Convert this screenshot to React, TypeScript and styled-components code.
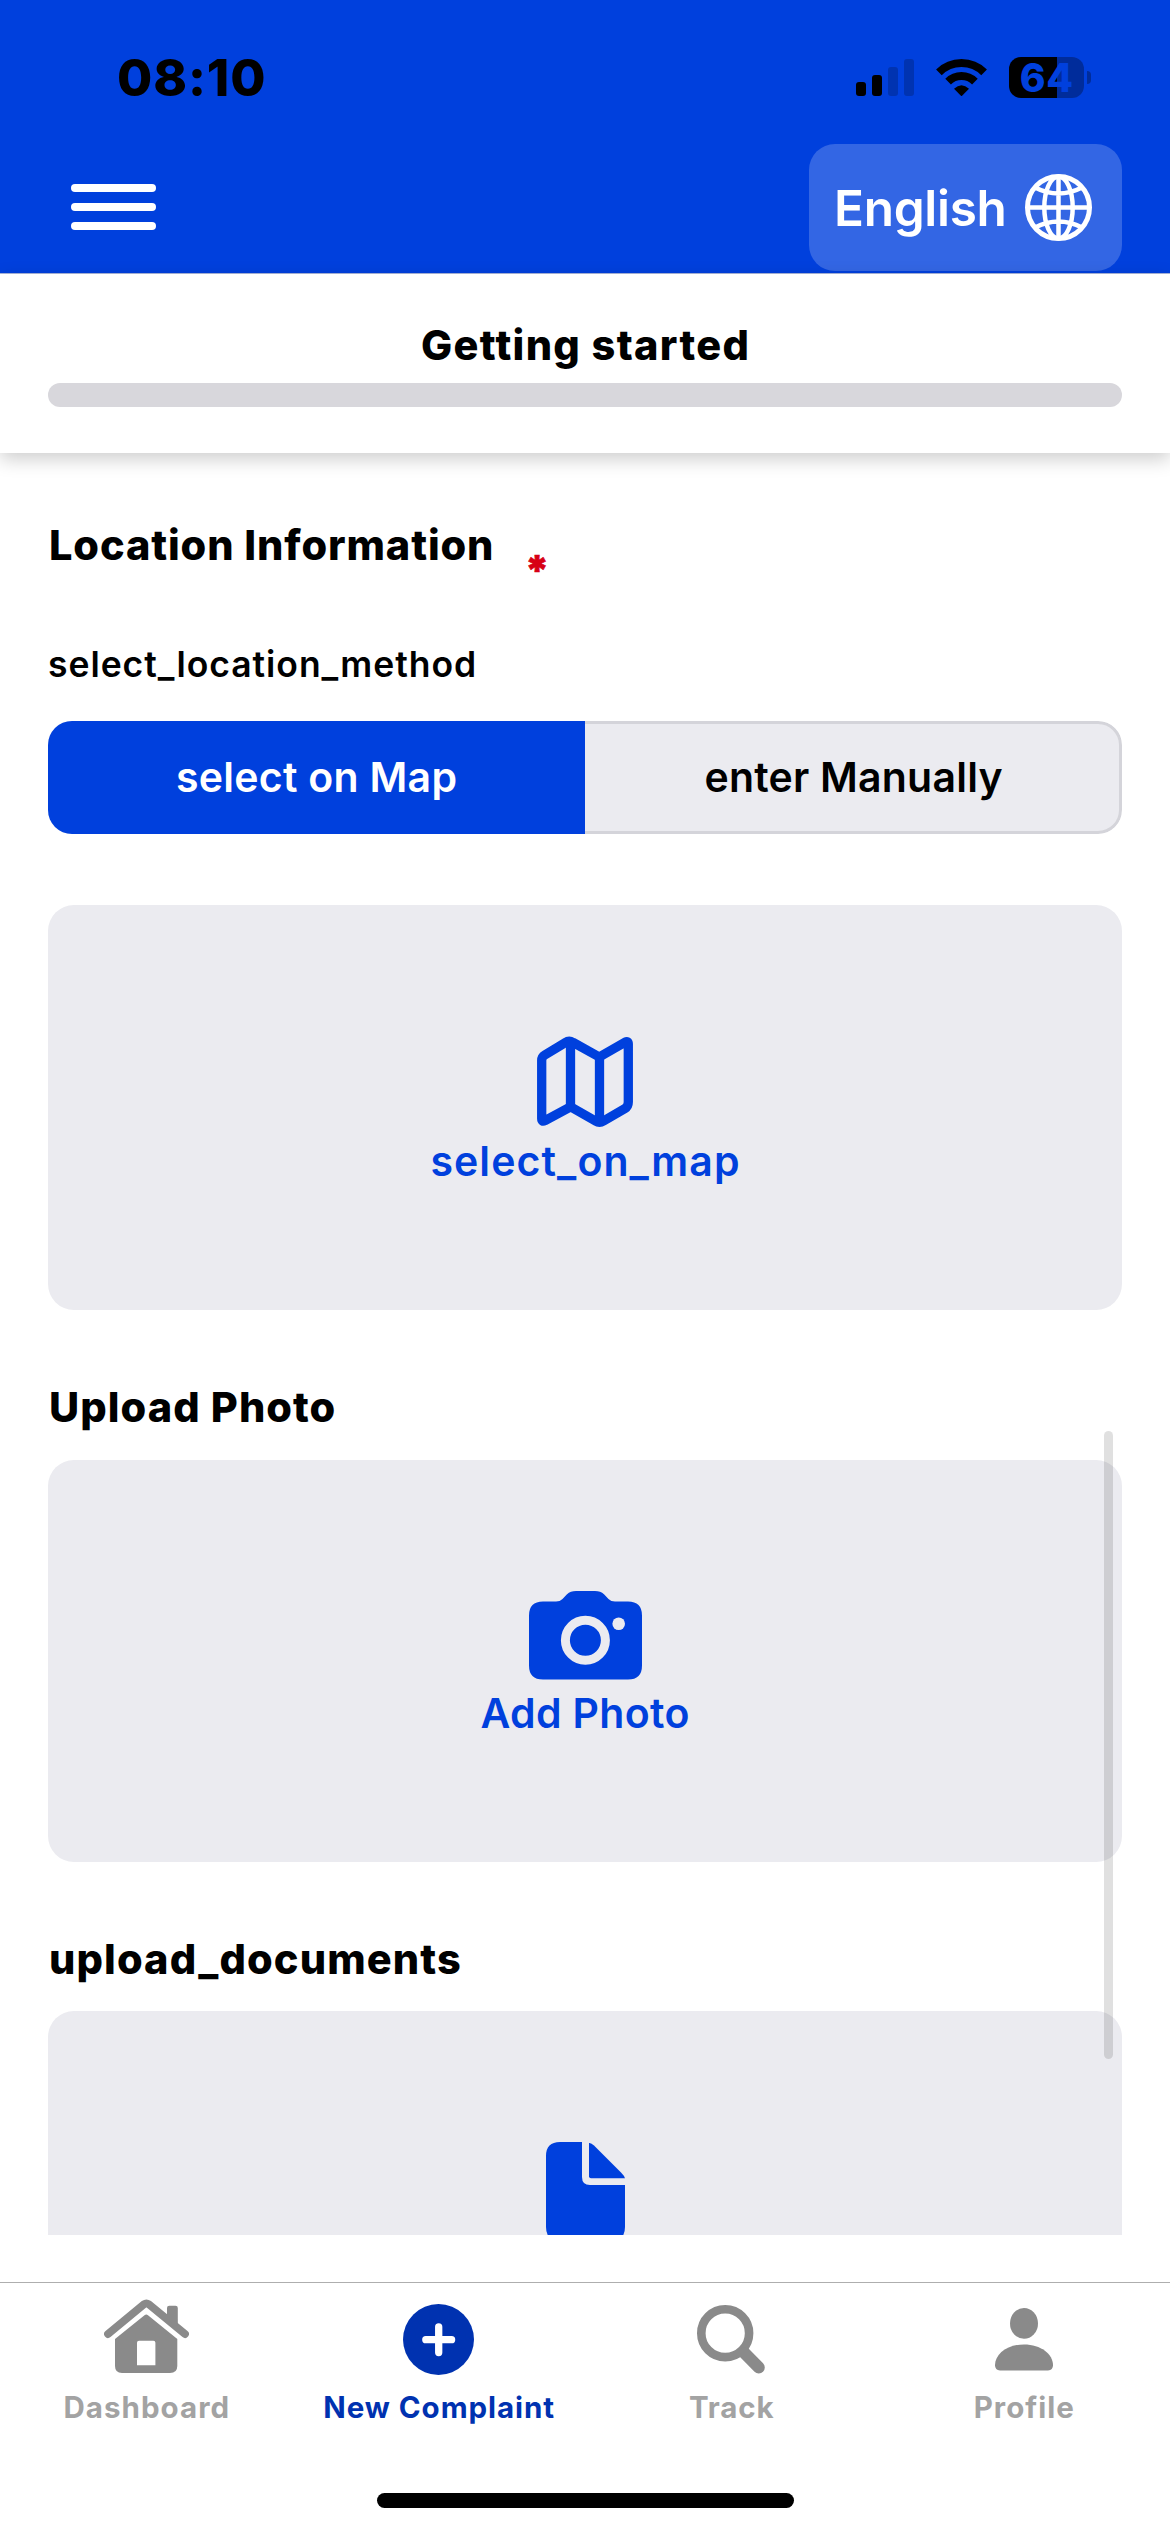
import React from 'react';
import styled, { createGlobalStyle } from 'styled-components';

const BLUE = '#0040dd';
const NAVY = '#0032b0';
const FILL = '#ebebf0';

const GlobalStyle = createGlobalStyle`
  * { box-sizing: border-box; }
  body { margin: 0; background: #fff; }
`;

const Screen = styled.div`
  display: flex;
  flex-direction: column;
  width: 1170px;
  height: 2532px;
  overflow: hidden;
  background: #fff;
  font-family: Inter, 'Liberation Sans', sans-serif;
`;

const Label = styled.span<{ $size: number; $weight: number; $track?: number; $color?: string; $line?: number }>`
  display: block;
  white-space: nowrap;
  font-size: ${(p) => p.$size}px;
  font-weight: ${(p) => p.$weight};
  line-height: ${(p) => p.$line ?? 50}px;
  letter-spacing: ${(p) => p.$track ?? 0}px;
  margin-right: ${(p) => -(p.$track ?? 0)}px;
  color: ${(p) => p.$color ?? '#000'};
`;

const Header = styled.header`
  flex: none;
  height: 274px;
  background: ${BLUE};
  border-bottom: 1px solid #a9b6dc;
`;

const StatusBar = styled.div`
  display: flex;
  align-items: center;
  justify-content: space-between;
  height: 144px;
  padding: 11px 79px 0 117px;
`;

const StatusIcons = styled.div`
  display: flex;
  align-items: center;
`;

const SignalBars = styled.div`
  display: flex;
  align-items: flex-end;
  gap: 6px;
  height: 37px;
  margin-right: 22px;
`;

const SignalBar = styled.i<{ $height: number; $on: boolean }>`
  width: 10px;
  height: ${(p) => p.$height}px;
  border-radius: 3px;
  background: ${(p) => (p.$on ? '#000' : '#0033b1')};
`;

const Battery = styled.div`
  display: flex;
  align-items: center;
  justify-content: center;
  width: 75px;
  height: 41px;
  margin-left: 22px;
  border-radius: 12px;
  background: linear-gradient(to right, #000 48px, #002c9b 48px);
`;

const BatteryNub = styled.i`
  width: 4px;
  height: 13px;
  margin-left: 3px;
  border-radius: 0 5px 5px 0;
  background: #002c9b;
`;

const NavRow = styled.div`
  display: flex;
  align-items: flex-start;
  justify-content: space-between;
  padding: 0 48px 0 71px;
`;

const MenuButton = styled.button`
  display: flex;
  flex-direction: column;
  justify-content: center;
  gap: 11.3px;
  width: 85px;
  height: 126px;
  padding: 0;
  border: 0;
  background: none;
`;

const MenuLine = styled.i`
  width: 85px;
  height: 7.8px;
  border-radius: 4px;
  background: #fff;
`;

const LanguageButton = styled.button`
  display: flex;
  align-items: center;
  justify-content: space-between;
  width: 313px;
  height: 127px;
  padding: 0 30px 0 25px;
  border: 0;
  border-radius: 26px;
  background: #3366e4;
  font-family: inherit;
`;

const ProgressPanel = styled.section`
  position: relative;
  z-index: 1;
  flex: none;
  display: flex;
  flex-direction: column;
  align-items: center;
  gap: 13px;
  height: 179px;
  padding: 46px 48px 0;
  background: #fff;
  box-shadow: 0 6px 18px rgba(0, 0, 0, 0.2);
`;

const ProgressTrack = styled.div`
  width: 100%;
  height: 24px;
  border-radius: 12px;
  background: #d8d7dc;
`;

const Form = styled.main`
  position: relative;
  flex: none;
  display: flex;
  flex-direction: column;
  height: 1782px;
  padding: 67px 48px 0;
  overflow: hidden;
`;

const HeadingRow = styled.div`
  display: flex;
  height: 50px;
  margin-bottom: 70px;
  padding-left: 1px;
`;

const RequiredMark = styled(Label)`
  margin: 25px 0 0 31px;
  -webkit-text-stroke: 0.6px currentColor;
`;

const Segmented = styled.div`
  position: relative;
  flex: none;
  display: grid;
  grid-template-columns: 1fr 1fr;
  height: 113px;
  margin: 31px 0 71px;
  border-radius: 24px;
  overflow: hidden;
  background: ${FILL};
  &::after {
    content: '';
    position: absolute;
    inset: 0;
    border: 3px solid rgba(60, 60, 67, 0.13);
    border-radius: 24px;
    clip-path: inset(0 0 0 50%);
  }
`;

const Segment = styled.button<{ $active?: boolean }>`
  display: flex;
  align-items: center;
  justify-content: center;
  padding: 0 0 2px;
  border: 0;
  font-family: inherit;
  background: ${(p) => (p.$active ? BLUE : 'transparent')};
`;

const DropCard = styled.button<{ $height: number; $gap?: number }>`
  flex: none;
  display: flex;
  flex-direction: column;
  align-items: center;
  gap: ${(p) => p.$gap ?? 8}px;
  height: ${(p) => p.$height}px;
  padding: 131px 0 0;
  border: 0;
  border-radius: 26px;
  background: ${FILL};
  font-family: inherit;
  & > svg { flex: none; }
`;

const SectionTitle = styled.div<{ $bottom: number }>`
  flex: none;
  padding: 72px 0 ${(p) => p.$bottom}px 1px;
`;

const ScrollThumb = styled.div`
  position: absolute;
  right: 57px;
  top: 978px;
  width: 9px;
  height: 628px;
  border-radius: 5px;
  background: rgba(0, 0, 0, 0.12);
`;

const TabBar = styled.nav`
  flex: none;
  display: grid;
  grid-template-columns: repeat(4, 1fr);
  height: 211px;
  margin-top: 47px;
  border-top: 1px solid #aeaeae;
`;

const Tab = styled.a`
  display: flex;
  flex-direction: column;
  align-items: center;
`;

const TabIcon = styled.div<{ $raise?: number }>`
  display: flex;
  align-items: center;
  height: 113px;
  padding-bottom: ${(p) => p.$raise ?? 0}px;
`;

const HomeIndicator = styled.div`
  flex: none;
  align-self: center;
  width: 417px;
  height: 15px;
  border-radius: 8px;
  background: #000;
`;

const WifiIcon = () => (
  <svg width="51" height="37" viewBox="0 0 51 37" fill="none" stroke="#000" strokeWidth="8">
    <path d="M2.9 13.4A32 32 0 0 1 48.1 13.4" />
    <path d="M12.1 22.6A19 19 0 0 1 38.9 22.6" />
    <path d="M25.5 37.3L18 29.8Q25.5 22.5 33 29.8Z" fill="#000" stroke="none" />
  </svg>
);

const GlobeIcon = () => (
  <svg width="67" height="67" viewBox="0 0 67 67" fill="none" stroke="#fff" strokeWidth="4.5">
    <circle cx="33.5" cy="33.5" r="31" strokeWidth="5" />
    <ellipse cx="33.5" cy="33.5" rx="14.2" ry="31" />
    <path d="M33.5 2V65M2 33.5H65M10 13.5Q33.5 25.5 57 13.5M10 53.5Q33.5 41.5 57 53.5" />
  </svg>
);

const MapIcon = () => (
  <svg width="96" height="91" viewBox="0 0 96 91" fill="none" stroke={BLUE} strokeWidth="9.3" strokeLinejoin="round">
    <path d="M4.7 24.5Q4.7 20.8 7.8 19L28.5 6.6Q32 4 36 6.4L62.3 21L88 6.2Q91.3 4.6 91.3 8V66Q91.3 70.5 88 72.5L66.5 85Q62.5 87.4 58.5 85L33.5 70.8L8 84.6Q4.7 86.2 4.7 82.6Z" />
    <path d="M33.5 6V70M62.5 22V85" />
  </svg>
);

const CameraIcon = () => (
  <svg width="113" height="89" viewBox="0 0 113 89">
    <path fill={BLUE} d="M14 10.5H27Q31 10.5 33.5 8L38 3.3Q41.5 0 47 0H66Q71.5 0 75 3.3L79.5 8Q82 10.5 86 10.5H99Q113 10.5 113 24.5V74.5Q113 88.5 99 88.5H14Q0 88.5 0 74.5V24.5Q0 10.5 14 10.5Z" />
    <circle cx="56.4" cy="49.3" r="20" fill="none" stroke={FILL} strokeWidth="9" />
    <circle cx="89.7" cy="32.7" r="6.3" fill={FILL} />
  </svg>
);

const FileIcon = () => (
  <svg width="79" height="99" viewBox="0 0 79 99" fill={BLUE}>
    <path d="M14 0H36V35Q36 43 44 43H79V85Q79 99 65 99H14Q0 99 0 85V14Q0 0 14 0Z" />
    <path d="M43 1Q45 0.5 48 3.5L75 30.5Q78.5 34 79 36.3H45Q43 36.3 43 34.3Z" />
  </svg>
);

const HouseIcon = () => (
  <svg width="85" height="74" viewBox="0 0 85 74" fill="#8a8a8a">
    <path d="M4 35L40 5.2Q42.4 3.6 44.8 5.2L81 35" fill="none" stroke="#8a8a8a" strokeWidth="7.8" strokeLinecap="round" strokeLinejoin="round" />
    <path d="M63 20V9Q63 6.7 65.3 6.7H71.5Q73.8 6.7 73.8 9V28L63 20Z" />
    <path fillRule="evenodd" d="M11 40L40.5 16.2Q42.3 14.8 44 16.2L73.3 40V67Q73.3 74 66 74H18Q11 74 11 67ZM35 41.7Q33 41.7 33 43.7V66.3H51.4V43.7Q51.4 41.7 49.4 41.7Z" />
  </svg>
);

const PlusIcon = () => (
  <svg width="71" height="71" viewBox="0 0 71 71">
    <circle cx="35.5" cy="35.5" r="35.5" fill={NAVY} />
    <path d="M22.8 35.7H48.6M35.7 22.8V48.6" stroke="#fff" strokeWidth="7.3" strokeLinecap="round" />
  </svg>
);

const SearchIcon = () => (
  <svg width="68" height="69" viewBox="0 0 68 69" fill="none" stroke="#8a8a8a">
    <circle cx="28.2" cy="28.2" r="23.9" strokeWidth="8.6" />
    <path d="M47.5 48L61.8 62.5" strokeWidth="12" strokeLinecap="round" />
  </svg>
);

const ProfileIcon = () => (
  <svg width="58" height="63" viewBox="0 0 58 63" fill="#8a8a8a">
    <ellipse cx="29" cy="15.4" rx="14" ry="15.4" />
    <path d="M0 57.3C0 46 12 36.4 29 36.4S58 46 58 57.3Q58 62.4 53 62.4H5Q0 62.4 0 57.3Z" />
  </svg>
);

const tabs = [
  { name: 'Dashboard', icon: <HouseIcon />, raise: 7, track: 1.05 },
  { name: 'New Complaint', icon: <PlusIcon />, track: 0.95, active: true },
  { name: 'Track', icon: <SearchIcon />, raise: 1, track: 0.85 },
  { name: 'Profile', icon: <ProfileIcon />, raise: 1, track: 1 },
];

export default function App() {
  return (
    <Screen>
      <GlobalStyle />
      <Header>
        <StatusBar>
          <Label $size={51} $weight={800} $track={0.9}>08:10</Label>
          <StatusIcons>
            <SignalBars>
              <SignalBar $height={14} $on />
              <SignalBar $height={21} $on />
              <SignalBar $height={29} $on={false} />
              <SignalBar $height={37} $on={false} />
            </SignalBars>
            <WifiIcon />
            <Battery>
              <Label $size={39} $weight={800} $track={0.8} $color={BLUE}>64</Label>
            </Battery>
            <BatteryNub />
          </StatusIcons>
        </StatusBar>
        <NavRow>
          <MenuButton aria-label="Menu">
            <MenuLine />
            <MenuLine />
            <MenuLine />
          </MenuButton>
          <LanguageButton>
            <Label $size={49.5} $weight={600} $track={-0.3} $color="#fff">English</Label>
            <GlobeIcon />
          </LanguageButton>
        </NavRow>
      </Header>
      <ProgressPanel>
        <Label $size={41.5} $weight={800} $track={1.33}>Getting started</Label>
        <ProgressTrack />
      </ProgressPanel>
      <Form>
        <HeadingRow>
          <Label $size={41.5} $weight={800} $track={0.88}>Location Information</Label>
          <RequiredMark $size={41.5} $weight={900} $color="#d70015">*</RequiredMark>
        </HeadingRow>
        <Label $size={35.5} $weight={600} $track={0.95}>select_location_method</Label>
        <Segmented>
          <Segment $active>
            <Label $size={41} $weight={600} $track={0.28} $color="#fff">select on Map</Label>
          </Segment>
          <Segment>
            <Label $size={41} $weight={600} $track={0.22}>enter Manually</Label>
          </Segment>
        </Segmented>
        <DropCard $height={405} $gap={9}>
          <MapIcon />
          <Label $size={41} $weight={600} $track={1.09} $color={BLUE}>select_on_map</Label>
        </DropCard>
        <SectionTitle $bottom={28}>
          <Label $size={41.5} $weight={800} $track={1.05}>Upload Photo</Label>
        </SectionTitle>
        <DropCard $height={402}>
          <CameraIcon />
          <Label $size={41} $weight={600} $track={0.34} $color={BLUE}>Add Photo</Label>
        </DropCard>
        <SectionTitle $bottom={27}>
          <Label $size={41.5} $weight={800} $track={1.11}>upload_documents</Label>
        </SectionTitle>
        <DropCard $height={402}>
          <FileIcon />
        </DropCard>
        <ScrollThumb />
      </Form>
      <TabBar>
        {tabs.map((t) => (
          <Tab key={t.name}>
            <TabIcon $raise={t.raise}>{t.icon}</TabIcon>
            <Label $size={29.5} $weight={700} $line={23} $track={t.track} $color={t.active ? NAVY : '#a3a3a3'}>
              {t.name}
            </Label>
          </Tab>
        ))}
      </TabBar>
      <HomeIndicator />
    </Screen>
  );
}
